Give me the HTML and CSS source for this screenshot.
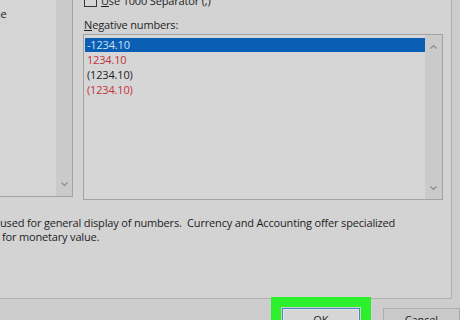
FILE: index.html
```html
<!DOCTYPE html>
<html lang="en">
<head>
  <meta charset="UTF-8">
  <title>Format Cells</title>
  <link rel="stylesheet" href="styles.css">
</head>
<body>
  <div class="tab-page">
    <div class="top">
      <div class="category-list">
        <div class="list-items">
          <div class="item">Time</div>
        </div>
        <div class="scrollbar">
          <svg class="arrow" width="7" height="5" viewBox="0 0 7 5"><path d="M0.5 0.5 L3.5 3.5 L6.5 0.5" /></svg>
        </div>
      </div>
      <div class="options">
        <label class="check-row">
          <span class="checkbox"></span>
          <span><u>U</u>se 1000 Separator (,)</span>
        </label>
        <div class="field-label"><u>N</u>egative numbers:</div>
        <div class="listbox">
          <ul class="neg-list">
            <li class="selected">-1234.10</li>
            <li class="red">1234.10</li>
            <li>(1234.10)</li>
            <li class="red">(1234.10)</li>
          </ul>
          <div class="scrollbar">
            <svg class="arrow" width="7" height="5" viewBox="0 0 7 5"><path d="M0.5 4.5 L3.5 1.5 L6.5 4.5" /></svg>
            <svg class="arrow" width="7" height="5" viewBox="0 0 7 5"><path d="M0.5 0.5 L3.5 3.5 L6.5 0.5" /></svg>
          </div>
        </div>
      </div>
    </div>
    <p class="description">
      <span class="line">used for general display of numbers.&nbsp; Currency and Accounting offer specialized</span>
      <span class="line second">for monetary value.</span>
    </p>
  </div>
  <div class="buttons">
    <button type="button" class="btn ok">OK</button>
    <button type="button" class="btn">Cancel</button>
  </div>
</body>
</html>
```

FILE: styles.css
```css
body {
  margin: 0;
  width: 460px;
  height: 320px;
  overflow: hidden;
  background-color: #cdcdcd;
  font-family: 'Open Sans', 'Liberation Sans', sans-serif;
  font-size: 11px;
  letter-spacing: -0.17px;
  color: #1e1e1e;
}

.tab-page {
  width: 451px;
  height: 298px;
  border-right: 1px solid #b0b0b0;
  border-bottom: 1px solid #b0b0b0;
  background-color: #d3d3d3;
}

.top {
  display: flex;
}

/* category list, cut by the left edge */
.category-list {
  display: flex;
  width: 72px;
  height: 196px;
  border-right: 1px solid #a3a3a3;
  border-bottom: 1px solid #a3a3a3;
  background-color: #d5d5d5;
}

.list-items {
  flex: 1;
  overflow: hidden;
  padding-top: 7px;
}

.item {
  margin-left: -18px;
  line-height: 14px;
  white-space: nowrap;
}

.scrollbar {
  width: 16px;
  display: flex;
  flex-direction: column;
  justify-content: flex-end;
  align-items: center;
  padding: 9px 0;
  background-color: #cacaca;
}

.arrow path {
  fill: none;
  stroke: #8c8c8c;
  stroke-width: 1.2;
}

.options {
  margin-left: 10px;
}

.check-row {
  display: flex;
  align-items: center;
  gap: 4px;
  height: 13px;
  margin-top: -6px;
  padding-left: 1px;
  line-height: 13px;
}

.checkbox {
  width: 11px;
  height: 11px;
  border: 1px solid #333;
  background-color: #d6d6d6;
}

.field-label {
  margin-top: 11px;
  padding-left: 1px;
  line-height: 14px;
}

.listbox {
  display: flex;
  width: 358px;
  height: 164px;
  margin-top: 2px;
  border: 1px solid #a3a3a3;
  background-color: #d6d6d6;
}

.neg-list {
  flex: 1;
  list-style: none;
  margin: 0;
  padding: 3px 0 0 1px;
}

.neg-list li {
  height: 14px;
  margin-bottom: 1px;
  padding-left: 2px;
  line-height: 14px;
}

.neg-list .selected {
  background-color: #0a5fb5;
  color: #cfe0f4;
}

.neg-list .red {
  color: #c4323c;
}

.listbox .scrollbar {
  width: 17px;
  justify-content: space-between;
  padding: 9px 0 8px;
}

.description {
  margin: 16px 0 0;
  line-height: 14px;
  white-space: nowrap;
}

.line {
  display: block;
}

.line.second {
  padding-left: 2px;
}

.buttons {
  display: flex;
  gap: 23px;
  margin-top: 9px;
  padding-left: 282px;
}

.btn {
  width: 80px;
  height: 23px;
  padding: 0;
  border: 1px solid #adadad;
  background-color: #c9c9c9;
  font-family: inherit;
  font-size: 11px;
  letter-spacing: inherit;
  color: #1e1e1e;
}

.btn.ok {
  border-color: #4a86c4;
  box-shadow: inset 0 0 0 1px #e4e4e4;
  background-color: #d6d6d6;
  outline: 10px solid #2bf02b;
  outline-offset: 1px;
}
```
